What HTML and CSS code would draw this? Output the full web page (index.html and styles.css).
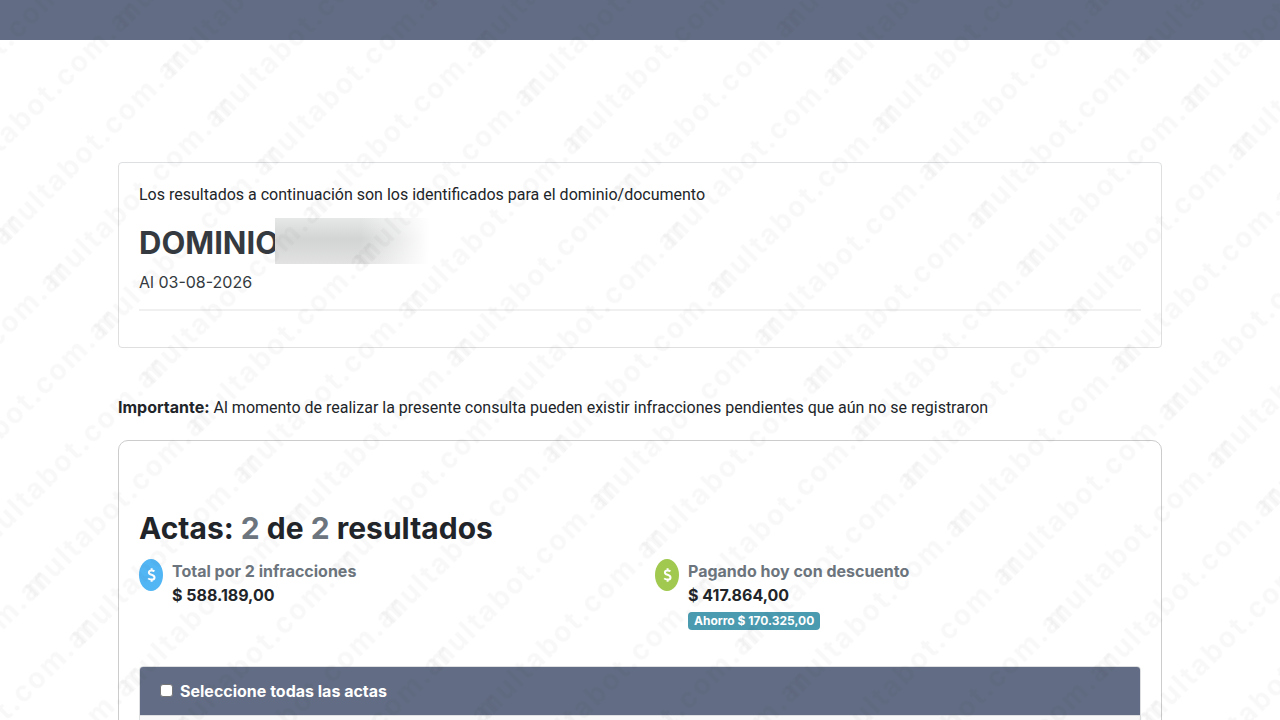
FILE: index.html
```html
<!DOCTYPE html>
<html lang="es">
<head>
<meta charset="utf-8">
<meta name="viewport" content="width=device-width, initial-scale=1">
<title>Consulta de infracciones</title>
<link rel="stylesheet" href="styles.css">
</head>
<body>
<header class="topbar"></header>
<main class="container">
  <section class="card">
    <p class="lead">Los resultados a continuación son los identificados para el dominio/documento</p>
    <h2 class="domain">DOMINIO<span class="redacted"></span></h2>
    <p class="date">Al 03-08-2026</p>
    <hr class="rule">
  </section>
  <p class="notice"><strong>Importante:</strong> Al momento de realizar la presente consulta pueden existir infracciones pendientes que aún no se registraron</p>
  <section class="results">
    <h1 class="title">Actas: <span class="count">2</span> de <span class="count">2</span> resultados</h1>
    <div class="totals">
      <div class="total">
        <span class="coin"><svg viewBox="0 0 9 16" width="9" height="16" aria-hidden="true"><path d="M7.4 4.4C6.7 3.7 5.700 3.400 4.600 3.400C3 3.400 1.900 4.100 1.900 5.400C1.900 8.400 7.500 7.200 7.500 10.400C7.500 11.900 6.200 12.600 4.500 12.600C3.100 12.600 2 12.200 1.200 11.400M4.600 1.200V3.400M4.600 12.600V14.800" /></svg></span>
        <div class="total-text">
          <span class="label">Total por 2 infracciones</span>
          <span class="amount">$ 588.189,00</span>
        </div>
      </div>
      <div class="total">
        <span class="coin coin-green"><svg viewBox="0 0 9 16" width="9" height="16" aria-hidden="true"><path d="M7.4 4.4C6.7 3.7 5.700 3.400 4.600 3.400C3 3.400 1.900 4.100 1.900 5.400C1.900 8.400 7.500 7.200 7.500 10.400C7.500 11.900 6.200 12.600 4.500 12.600C3.100 12.600 2 12.200 1.200 11.400M4.600 1.200V3.400M4.600 12.600V14.800" /></svg></span>
        <div class="total-text">
          <span class="label">Pagando hoy con descuento</span>
          <span class="amount">$ 417.864,00</span>
          <span class="badge">Ahorro $ 170.325,00</span>
        </div>
      </div>
    </div>
    <div class="list">
      <div class="list-head">
        <input class="check" type="checkbox" id="all">
        <label for="all">Seleccione todas las actas</label>
      </div>
      <div class="list-body"></div>
    </div>
  </section>
</main>
<svg class="watermark" width="100%" height="100%" aria-hidden="true">
  <defs>
    <pattern id="wm" patternUnits="userSpaceOnUse" width="233" height="271" patternTransform="rotate(-45)">
      <g id="row">
        <text x="67" y="41">multabot.com.ar</text>
        <text x="-166" y="41">multabot.com.ar</text>
      </g>
      <use href="#row" y="68"/>
      <use href="#row" y="136"/>
      <use href="#row" y="203"/>
    </pattern>
  </defs>
  <rect width="100%" height="100%" fill="url(#wm)"/>
</svg>
</body>
</html>
```
FILE: styles.css
```css
* { box-sizing: border-box; }
body {
  margin: 0;
  height: 100vh;
  overflow: hidden;
  background: #fff;
  color: #212529;
  font: 16px/24px Inter, "Liberation Sans", sans-serif;
}
p, h1, h2 { margin: 0; }
.topbar { height: 40px; background: #626c84; }
.container {
  max-width: 1084px;
  margin: 0 auto;
  padding: 122px 20px 0;
}
.card {
  padding: 20px 20px 36px;
  border: 1px solid #dedfe0;
  border-radius: 4px;
}
.lead, .notice { font-family: Roboto, Inter, sans-serif; }
.notice strong { font-family: Inter, sans-serif; line-height: 16px; }
.domain {
  display: flex;
  height: 46px;
  margin-top: 11px;
  color: #343a40;
  font-size: 31px;
  font-weight: 700;
  line-height: 50px;
}
.redacted {
  width: 156px;
  height: 46px;
  margin-left: -4px;
  background: linear-gradient(90deg, transparent 55%, #fff 99%), linear-gradient(#e6e7e7, #d3d4d4 45%, #d6d7d7 60%, #e2e2e2);
}
.date { margin-top: 6px; color: #343a40; }
.rule {
  height: 2px;
  margin: 15px 0 0;
  border: 0;
  background: #f0f0f0;
}
.notice { margin-top: 48px; }
.results {
  margin-top: 20px;
  padding: 63px 20px 40px;
  border: 1px solid #ccc;
  border-radius: 10px;
}
.title { font-size: 30px; font-weight: 700; line-height: 48px; }
.count, .label { color: #6c757d; }
.totals {
  display: grid;
  grid-template-columns: 1fr 1fr;
  column-gap: 30px;
  margin-top: 7px;
}
.total { display: flex; gap: 9px; font-weight: 700; }
.total-text { display: flex; flex-direction: column; align-items: flex-start; }
.coin {
  display: flex;
  align-items: center;
  justify-content: center;
  width: 24px;
  height: 32px;
  border-radius: 50%;
  background: #52b6f5;
}
.coin-green { background: #a1c94f; }
.coin path { fill: none; stroke: #fff; stroke-width: 2; }
.badge {
  margin-top: 5px;
  padding: 0 6px;
  border-radius: 4px;
  background: #4a9ab0;
  color: #fff;
  font-size: 12px;
  line-height: 18px;
}
.list {
  margin-top: 36px;
  border: 1px solid #dedfe0;
  border-radius: 4px;
  overflow: hidden;
}
.list-head {
  display: flex;
  align-items: center;
  gap: 7px;
  height: 48px;
  padding: 0 20px;
  background: #626c84;
  color: #fff;
  font-weight: 700;
}
.check {
  appearance: none;
  width: 13px;
  height: 13px;
  margin: 0 0 2px;
  border: 1px solid #767676;
  border-radius: 3px;
  background: #fff;
}
.list-body { height: 120px; background: #f8f8f8; border-top: 1px solid #dedfe0; }
.watermark {
  position: fixed;
  inset: 0;
  pointer-events: none;
}
.watermark text {
  fill: #141430;
  fill-opacity: 0.03;
  font-size: 28px;
  font-weight: 700;
  letter-spacing: 2px;
}
```
